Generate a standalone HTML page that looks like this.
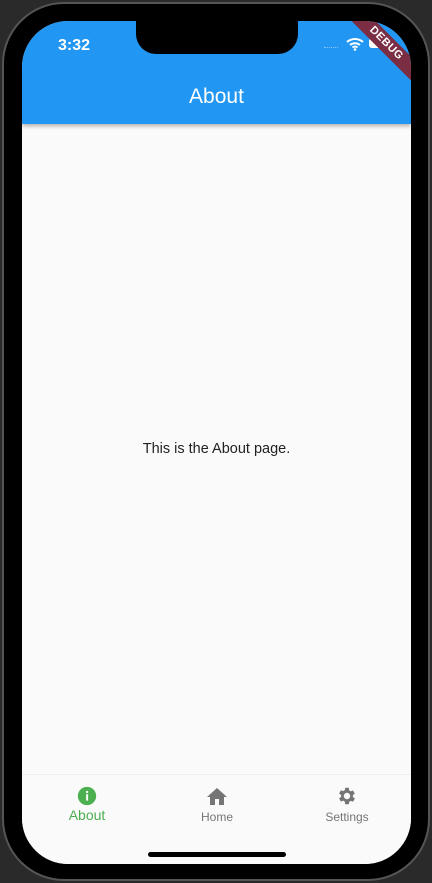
<!DOCTYPE html>
<html><head><meta charset="utf-8"><style>
*{margin:0;padding:0;box-sizing:border-box}
body{width:432px;height:883px;background:#2a2a2a;position:relative;overflow:hidden;font-family:"Liberation Sans",sans-serif}
.frame{position:absolute;left:2px;top:2px;width:428px;height:879px;border-radius:62px;background:#000;border:2px solid #555}
.screen{position:absolute;left:22px;top:21px;width:389px;height:843px;border-radius:46px;background:#fafafa;overflow:hidden}
.bar{position:absolute;left:0;top:0;width:389px;height:103px;background:#2196f3;box-shadow:0 2px 4px rgba(0,0,0,.3);overflow:hidden}
.notch{position:absolute;left:114px;top:0;width:162px;height:33px;background:#000;border-radius:0 0 20px 20px}
.time{position:absolute;left:36px;top:16px;color:#fff;font-size:16px;font-weight:bold}
.title{position:absolute;left:0;width:389px;top:64px;text-align:center;color:#fff;font-size:21px}
.center{position:absolute;left:0;width:389px;top:420px;text-align:center;color:#222;font-size:14.5px}
.nav{position:absolute;left:0;top:753px;width:389px;height:90px;border-top:1px solid #eee;background:#fafafa}
.item{position:absolute;top:10px;width:100px;text-align:center;font-size:12px;color:#757575}
.home{position:absolute;left:126px;top:831px;width:138px;height:5px;border-radius:3px;background:#000}
.debug{position:absolute;right:-30px;top:14px;width:110px;height:17px;background:#7b2d43;transform:rotate(45deg);color:#fff;font-size:11px;font-weight:bold;text-align:center;line-height:17px;letter-spacing:.5px}
</style></head><body>
<div class="frame"></div>
<div class="screen">
<div class="bar"><div class="time">3:32</div><div class="title">About</div>
<svg style="position:absolute;left:324px;top:16px" width="18" height="14" viewBox="0 0 18 14"><path d="M1 5a12 12 0 0 1 16 0M4 8a8 8 0 0 1 10 0M6.5 10.5a4 4 0 0 1 5 0" stroke="#fff" stroke-width="2" fill="none"/><circle cx="9" cy="12.5" r="1.3" fill="#fff"/></svg>
<div style="position:absolute;left:347px;top:17px;width:20px;height:10px;border-radius:3px;background:#fff"></div>
<div style="position:absolute;left:302px;top:26px;width:14px;height:1px;border-top:1px dotted #8bc4f5"></div>
<div class="debug">DEBUG</div>
</div>
<div class="notch"></div>
<div class="center">This is the About page.</div>
<div class="nav">
<div class="item" style="left:15px;color:#4caf50;font-size:14px">
<svg width="22" height="22" viewBox="0 0 24 24"><circle cx="12" cy="12" r="10" fill="#4caf50"/><rect x="11" y="10" width="2.2" height="7" fill="#fff"/><rect x="11" y="6.5" width="2.2" height="2.2" fill="#fff"/></svg><div style="margin-top:-3px">About</div></div>
<div class="item" style="left:145px">
<svg width="24" height="22" viewBox="0 0 24 22"><path d="M10 20v-6h4v6h5v-8h3L12 3 2 12h3v8z" fill="#757575"/></svg><div style="margin-top:0px">Home</div></div>
<div class="item" style="left:275px">
<svg width="22" height="22" viewBox="0 0 24 24"><path fill="#757575" d="M19.4 13a7.5 7.5 0 0 0 0-2l2.1-1.6-2-3.5-2.5 1a7.7 7.7 0 0 0-1.7-1L15 3h-4l-.4 2.7c-.6.3-1.2.6-1.7 1l-2.5-1-2 3.5L6.6 11a7.5 7.5 0 0 0 0 2l-2.2 1.6 2 3.5 2.5-1c.5.4 1.1.7 1.7 1L11 21h4l.4-2.7c.6-.3 1.2-.6 1.7-1l2.5 1 2-3.5zM13 15.5a3.5 3.5 0 1 1 0-7 3.5 3.5 0 0 1 0 7z" transform="translate(-1 0)"/></svg><div style="margin-top:0px">Settings</div></div>
</div>
<div class="home"></div>
</div>
</body></html>
